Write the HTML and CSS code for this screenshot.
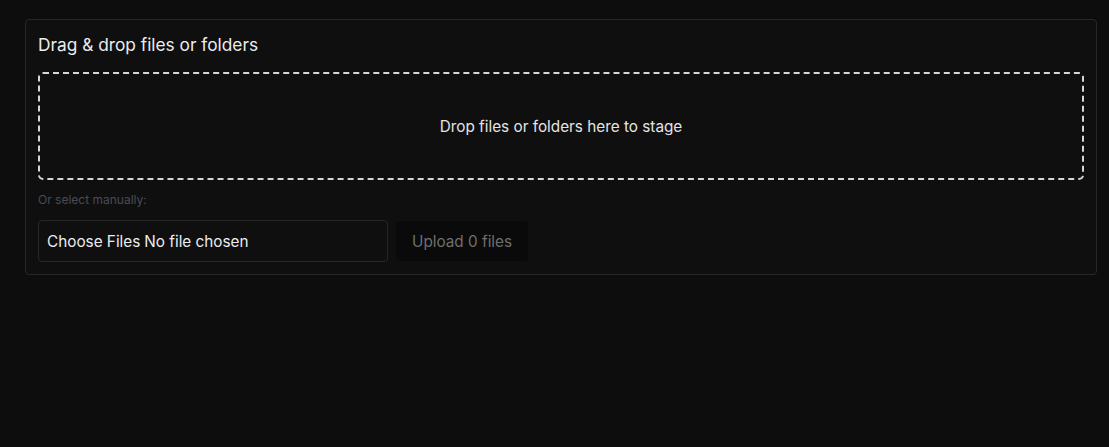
FILE: index.html
```html
<!DOCTYPE html>
<html lang="en">
<head>
<meta charset="utf-8">
<title>Upload</title>
<link rel="stylesheet" href="styles.css">
</head>
<body>
<main class="page">
  <section class="card">
    <h2 class="card-title">Drag &amp; drop files or folders</h2>
    <div class="dropzone">Drop files or folders here to stage</div>
    <p class="hint">Or select manually:</p>
    <div class="row">
      <label class="file-picker">
        <input class="file-input" type="file" multiple>
        <span class="file-btn">Choose Files</span>
        <span class="file-name">No file chosen</span>
      </label>
      <button class="upload-btn" type="button" disabled>Upload 0 files</button>
    </div>
  </section>
</main>
</body>
</html>
```
FILE: styles.css
```css
html, body {
  margin: 0;
  padding: 0;
  background: #0d0d0e;
  height: 100%;
}
body {
  font-family: Inter, "Noto Sans", "Liberation Sans", sans-serif;
  color: #e6e6e6;
}
.page {
  padding: 19px 12px 0 25px;
}
.card {
  background: #0f0f10;
  border: 1px solid #27272a;
  border-radius: 4px;
  padding: 12px;
}
.card-title {
  margin: 0 0 14px;
  font-size: 17.3px;
  line-height: 26px;
  font-weight: 400;
  color: #ececec;
}
.dropzone {
  height: 104px;
  border: 2px dashed #d6d6d6;
  border-radius: 5px;
  display: flex;
  align-items: center;
  justify-content: center;
  font-size: 15.3px;
  color: #e4e4e4;
}
.hint {
  margin: 12px 0 12px;
  font-size: 12px;
  line-height: 16px;
  color: #4b4b55;
}
.row {
  display: flex;
  align-items: center;
  gap: 8px;
}
.file-picker {
  width: 350px;
  height: 42px;
  box-sizing: border-box;
  border: 1px solid #27272a;
  border-radius: 4px;
  display: flex;
  align-items: center;
  padding: 0 8px;
  font-size: 15.3px;
  color: #ececec;
  gap: 4px;
}
.file-input {
  display: none;
}
.upload-btn {
  height: 40px;
  padding: 0 16px;
  border: none;
  border-radius: 4px;
  background: #0a0a0a;
  color: #6f6f6f;
  font-family: inherit;
  font-size: 15.3px;
}
```
